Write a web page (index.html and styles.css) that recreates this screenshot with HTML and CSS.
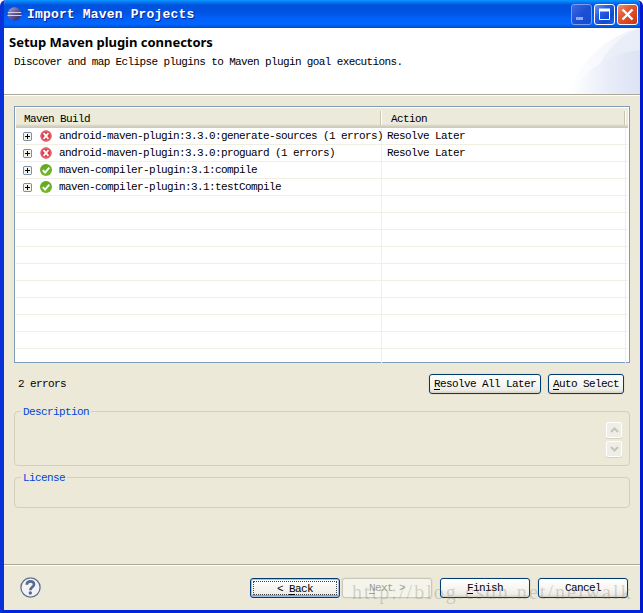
FILE: index.html
```html
<!DOCTYPE html>
<html lang="en">
<head>
<meta charset="utf-8">
<title>Import Maven Projects</title>
<link rel="stylesheet" href="styles.css">
</head>
<body>
<svg class="defs" aria-hidden="true">
  <defs>
    <linearGradient id="orb" x1="0" y1="0" x2="1" y2="1"><stop offset="0" stop-color="#b5a8c8"/><stop offset=".5" stop-color="#5f5799"/><stop offset="1" stop-color="#2a2268"/></linearGradient>
    <linearGradient id="ok" x1="0" y1="0" x2="0" y2="1"><stop offset="0" stop-color="#5fa622"/><stop offset="1" stop-color="#78b92a"/></linearGradient>
    <linearGradient id="arc" x1="0" y1="0" x2="1" y2="0"><stop offset="0" stop-color="#fff"/><stop offset="1" stop-color="#eef1f9"/></linearGradient>
    <linearGradient id="arc2" x1="0" y1="0" x2="1" y2="0"><stop offset="0" stop-color="#fff"/><stop offset=".55" stop-color="#e9edf8"/><stop offset="1" stop-color="#dce3f4"/></linearGradient>
    <symbol id="expand" viewBox="0 0 9 9"><path d="M1 .5h7l.5.5v7l-.5.5H1L.5 8V1z" fill="#f4f2ea" stroke="#7b91ab"/><path d="M2 4.5h5M4.5 2v5" stroke="#000"/></symbol>
    <symbol id="error" viewBox="0 0 12 12"><circle cx="6" cy="6" r="5.7" fill="#dc3f4c"/><circle cx="6" cy="6" r="4.9" fill="none" stroke="#f08388" stroke-width=".7"/><path d="M3.6 3.2l4.8 5.6M8.4 3.2L3.6 8.8" stroke="#fff" stroke-width="1.8"/></symbol>
    <symbol id="check" viewBox="0 0 12 12"><circle cx="6" cy="6" r="6" fill="url(#ok)"/><path d="M2.8 6.2l2.3 2.4 4.2-5" fill="none" stroke="#fff" stroke-width="1.9"/></symbol>
  </defs>
</svg>
<div class="window">
  <header class="titlebar">
    <svg class="logo" viewBox="0 0 15 14"><circle cx="7.5" cy="7" r="6.7" fill="url(#orb)"/><path d="M.8 5.5h13.4M.5 8.5h14" stroke="#d5d0ea" stroke-width="1"/></svg>
    <h1 class="title">Import Maven Projects</h1>
    <div class="controls">
      <span class="control minimize"><svg viewBox="0 0 21 21"><path d="M5 14.5h7" stroke="#8fa9ed" stroke-width="3"/></svg></span>
      <span class="control"><svg viewBox="0 0 21 21"><path d="M5.5 5v10.5h10V5" fill="none" stroke="#fff"/><path d="M5 6h11" stroke="#fff" stroke-width="3"/></svg></span>
      <span class="control close"><svg viewBox="0 0 21 21"><path d="M5.5 5.5l10 10m0-10l-10 10" stroke="#fff" stroke-width="2.4"/></svg></span>
    </div>
  </header>
  <section class="banner">
    <svg class="swoosh" viewBox="0 0 75 66"><path d="M0 66C18 30 43 7 75 0v66z" fill="url(#arc)"/><path d="M34 38C43 20 58 5 75 1v60z" fill="#e6ebf7" opacity=".7"/><path d="M4 66C20 42 44 25 75 22v44z" fill="url(#arc2)"/></svg>
    <h2 class="heading">Setup Maven plugin connectors</h2>
    <p class="subheading">Discover and map Eclipse plugins to Maven plugin goal executions.</p>
  </section>
  <main class="content">
    <div class="table">
      <div class="thead"><span class="th build">Maven Build</span><span class="th action">Action</span></div>
      <div class="tbody">
        <div class="row"><div class="cell build"><svg class="plus"><use href="#expand"/></svg><svg class="status"><use href="#error"/></svg><span>android-maven-plugin:3.3.0:generate-sources (1 errors)</span></div><div class="cell action">Resolve Later</div></div>
        <div class="row"><div class="cell build"><svg class="plus"><use href="#expand"/></svg><svg class="status"><use href="#error"/></svg><span>android-maven-plugin:3.3.0:proguard (1 errors)</span></div><div class="cell action">Resolve Later</div></div>
        <div class="row"><div class="cell build"><svg class="plus"><use href="#expand"/></svg><svg class="status"><use href="#check"/></svg><span>maven-compiler-plugin:3.1:compile</span></div><div class="cell action"></div></div>
        <div class="row"><div class="cell build"><svg class="plus"><use href="#expand"/></svg><svg class="status"><use href="#check"/></svg><span>maven-compiler-plugin:3.1:testCompile</span></div><div class="cell action"></div></div>
        <div class="row"><div class="cell build"></div><div class="cell action"></div></div>
        <div class="row"><div class="cell build"></div><div class="cell action"></div></div>
        <div class="row"><div class="cell build"></div><div class="cell action"></div></div>
        <div class="row"><div class="cell build"></div><div class="cell action"></div></div>
        <div class="row"><div class="cell build"></div><div class="cell action"></div></div>
        <div class="row"><div class="cell build"></div><div class="cell action"></div></div>
        <div class="row"><div class="cell build"></div><div class="cell action"></div></div>
        <div class="row"><div class="cell build"></div><div class="cell action"></div></div>
        <div class="row"><div class="cell build"></div><div class="cell action"></div></div>
        <div class="row last"><div class="cell build"></div><div class="cell action"></div></div>
      </div>
    </div>
    <div class="summary">
      <span class="count">2 errors</span>
      <button class="button resolve"><span><u>R</u>esolve All Later</span></button>
      <button class="button auto"><span><u>A</u>uto Select</span></button>
    </div>
    <section class="group description">
      <h3 class="legend">Description</h3>
      <div class="scroller">
        <span class="arrow"><svg viewBox="0 0 9 6"><path d="M1 5l3.5-3.5L8 5" fill="none" stroke="#c5c4bb" stroke-width="2"/></svg></span>
        <span class="arrow"><svg viewBox="0 0 9 6"><path d="M1 1l3.5 3.5L8 1" fill="none" stroke="#c5c4bb" stroke-width="2"/></svg></span>
      </div>
    </section>
    <section class="group license"><h3 class="legend">License</h3></section>
  </main>
  <footer class="footer">
    <svg class="help" viewBox="0 0 21 21"><circle cx="10.5" cy="10.5" r="9.6" fill="#f3f3f5" stroke="#60718f" stroke-width="1.3"/><path d="M6.8 7.7C7 3.2 14.2 3.5 14 7.4c0 2.5-3.7 2.7-3.7 5.9" fill="none" stroke="#566b91" stroke-width="2.7"/><circle cx="10.3" cy="16" r="1.7" fill="#566b91"/></svg>
    <button class="button nav focused"><span>&lt; <u>B</u>ack</span></button>
    <button class="button nav next" disabled><span><u>N</u>ext &gt;</span></button>
    <button class="button nav finish"><span><u>F</u>inish</span></button>
    <button class="button nav cancel"><span>Cancel</span></button>
    <span class="watermark">http://blog.csdn.net/neiwalk</span>
  </footer>
</div>
</body>
</html>
```

FILE: styles.css
```css
* { box-sizing: border-box; }
html, body { margin: 0; }
body {
  width: 643px; height: 613px; overflow: hidden; background: #fff;
  font: 11px/17px "Liberation Mono", monospace; letter-spacing: -0.6px; color: #000;
}
h1, h2, h3, p { margin: 0; font-weight: normal; }
svg { display: block; flex: none; }
.defs { position: absolute; width: 0; height: 0; }
.window {
  display: flex; flex-direction: column; width: 643px; height: 613px;
  background: #ece9d8; border-radius: 6px 6px 0 0; overflow: hidden;
  border: solid; border-width: 0 3px 3px 4px;
  border-color: #0831d9 #0019cf #0023dc #0831d9;
}
.titlebar {
  display: flex; align-items: center; height: 28px; flex: none; margin: 0 -3px 0 -4px; padding: 0 5px 0 7px;
  background: linear-gradient(#0997ff 0, #0a7af5 2px, #0053dd 5px, #0053e1 12px, #0060f8 18px, #0066ff 24px, #005be8 26px, #0048cf 28px);
}
.logo { width: 15px; height: 14px; margin-right: 5px; }
.title { font: bold 13px/20px "Liberation Mono", monospace; letter-spacing: .17px; color: #fff; text-shadow: 1px 1px #06268f; padding-top: 2px; }
.controls { display: flex; gap: 2px; margin-left: auto; padding-top: 1px; }
.control { width: 21px; height: 21px; border: 1px solid #fff; border-radius: 3px; background: linear-gradient(135deg, #6d94f2, #2860e2 35%, #1048d1 70%, #1d68ef); }
.control svg { width: 21px; height: 21px; margin: -1px; }
.minimize { border-color: #7f9ded; background: linear-gradient(135deg, #3d6ae1, #1c50d5 50%, #124bd2); }
.close { background: linear-gradient(135deg, #ed9175, #e45b38 35%, #d9421b 75%, #c23a18); }
.banner { position: relative; height: 67px; flex: none; background: #fff; border-bottom: 1px solid #aca899; padding: 4px 0 0 5px; width: 636px; }
.swoosh { position: absolute; right: 0; top: 0; width: 75px; height: 66px; }
.heading { font: bold 13px/20px "Noto Sans", sans-serif; letter-spacing: -.02px; }
.subheading { margin: 2px 0 0 5px; letter-spacing: -.625px; }
.content { flex: 1; border-top: 1px solid #fff; padding: 10px 10px 0; }
.table { height: 257px; width: 616px; border: 1px solid #7f9db9; background: #fff; padding: 1px; }
.thead { display: flex; align-items: center; height: 20px; background: linear-gradient(#ebeadb 16px, #e2decd 17px, #d6d2c2 18px, #cbc7b8 20px); }
.th { height: 14px; line-height: 16px; border-right: 1px solid #c7c5b2; box-shadow: 1px 0 #fff; }
.th.build { width: 365px; padding-left: 8px; }
.th.action { width: 244px; padding-left: 10px; }
.row { display: flex; height: 17px; border-bottom: 1px solid #f0efe3; }
.row.last { border: 0; height: 14px; }
.cell { display: flex; align-items: center; border-right: 1px solid #f0efe3; white-space: pre; }
.cell.build { width: 366px; padding-left: 7px; }
.cell.action { width: 244px; padding-left: 5px; }
.plus { width: 9px; height: 9px; margin-right: 8px; }
.status { width: 12px; height: 12px; margin-right: 7px; }
.summary { display: flex; align-items: center; margin-top: 11px; height: 20px; padding: 0 6px 0 4px; }
.count { margin-right: auto; }
.button {
  height: 20px; padding: 0; flex: none; border: 1px solid #003c74; border-radius: 3px;
  background: linear-gradient(#fff, #f5f4ef 60%, #ecebe5 85%, #d6d0c5);
  font: inherit; line-height: 18px; letter-spacing: inherit; color: #000; box-shadow: 0 0 0 1px #e4e1d0, 0 1px #fff;
}
.button u { text-underline-offset: 2px; }
.resolve { width: 112px; margin-right: 7px; }
.auto { width: 76px; }
.group { position: relative; width: 616px; border: 1px solid #d0d0bf; border-radius: 4px; }
.description { height: 55px; margin-top: 17px; }
.license { height: 31px; margin-top: 11px; }
.legend { position: absolute; left: 6px; top: -8px; padding: 0 2px; line-height: 16px; font-size: 11px; color: #0046d5; background: #ece9d8; }
.scroller { display: flex; flex-direction: column; align-items: flex-end; gap: 3px; padding: 10px 7px 0 0; }
.arrow { display: flex; align-items: center; justify-content: center; width: 16px; height: 16px; background: #efeee6; border: 1px solid #fff; border-radius: 2px; box-shadow: 0 1px #d5d2c4; }
.arrow svg { width: 9px; height: 6px; }
.footer { position: relative; display: flex; align-items: center; height: 46px; flex: none; border-top: 1px solid #aca899; box-shadow: inset 0 1px #fff; padding: 0 12px 0 16px; }
.help { width: 21px; height: 21px; margin-right: auto; }
.nav { width: 90px; }
.next { margin: 0 8px 0 2px; border-color: #c9c7ba; background: #f5f4ea; color: #a1a192; }
.finish { margin-right: 8px; }
.focused { border-color: #003c74; box-shadow: inset 0 0 0 1px #a5bff0, inset 0 -2px #7f9fe0; padding: 2px; }
.focused span { display: block; height: 14px; line-height: 14px; border: 1px dotted #444; }
.watermark { position: absolute; left: 348px; top: 15px; font: 20px/24px "Liberation Serif", serif; letter-spacing: 2.05px; color: rgba(130,130,120,.32); white-space: nowrap; pointer-events: none; }
```
